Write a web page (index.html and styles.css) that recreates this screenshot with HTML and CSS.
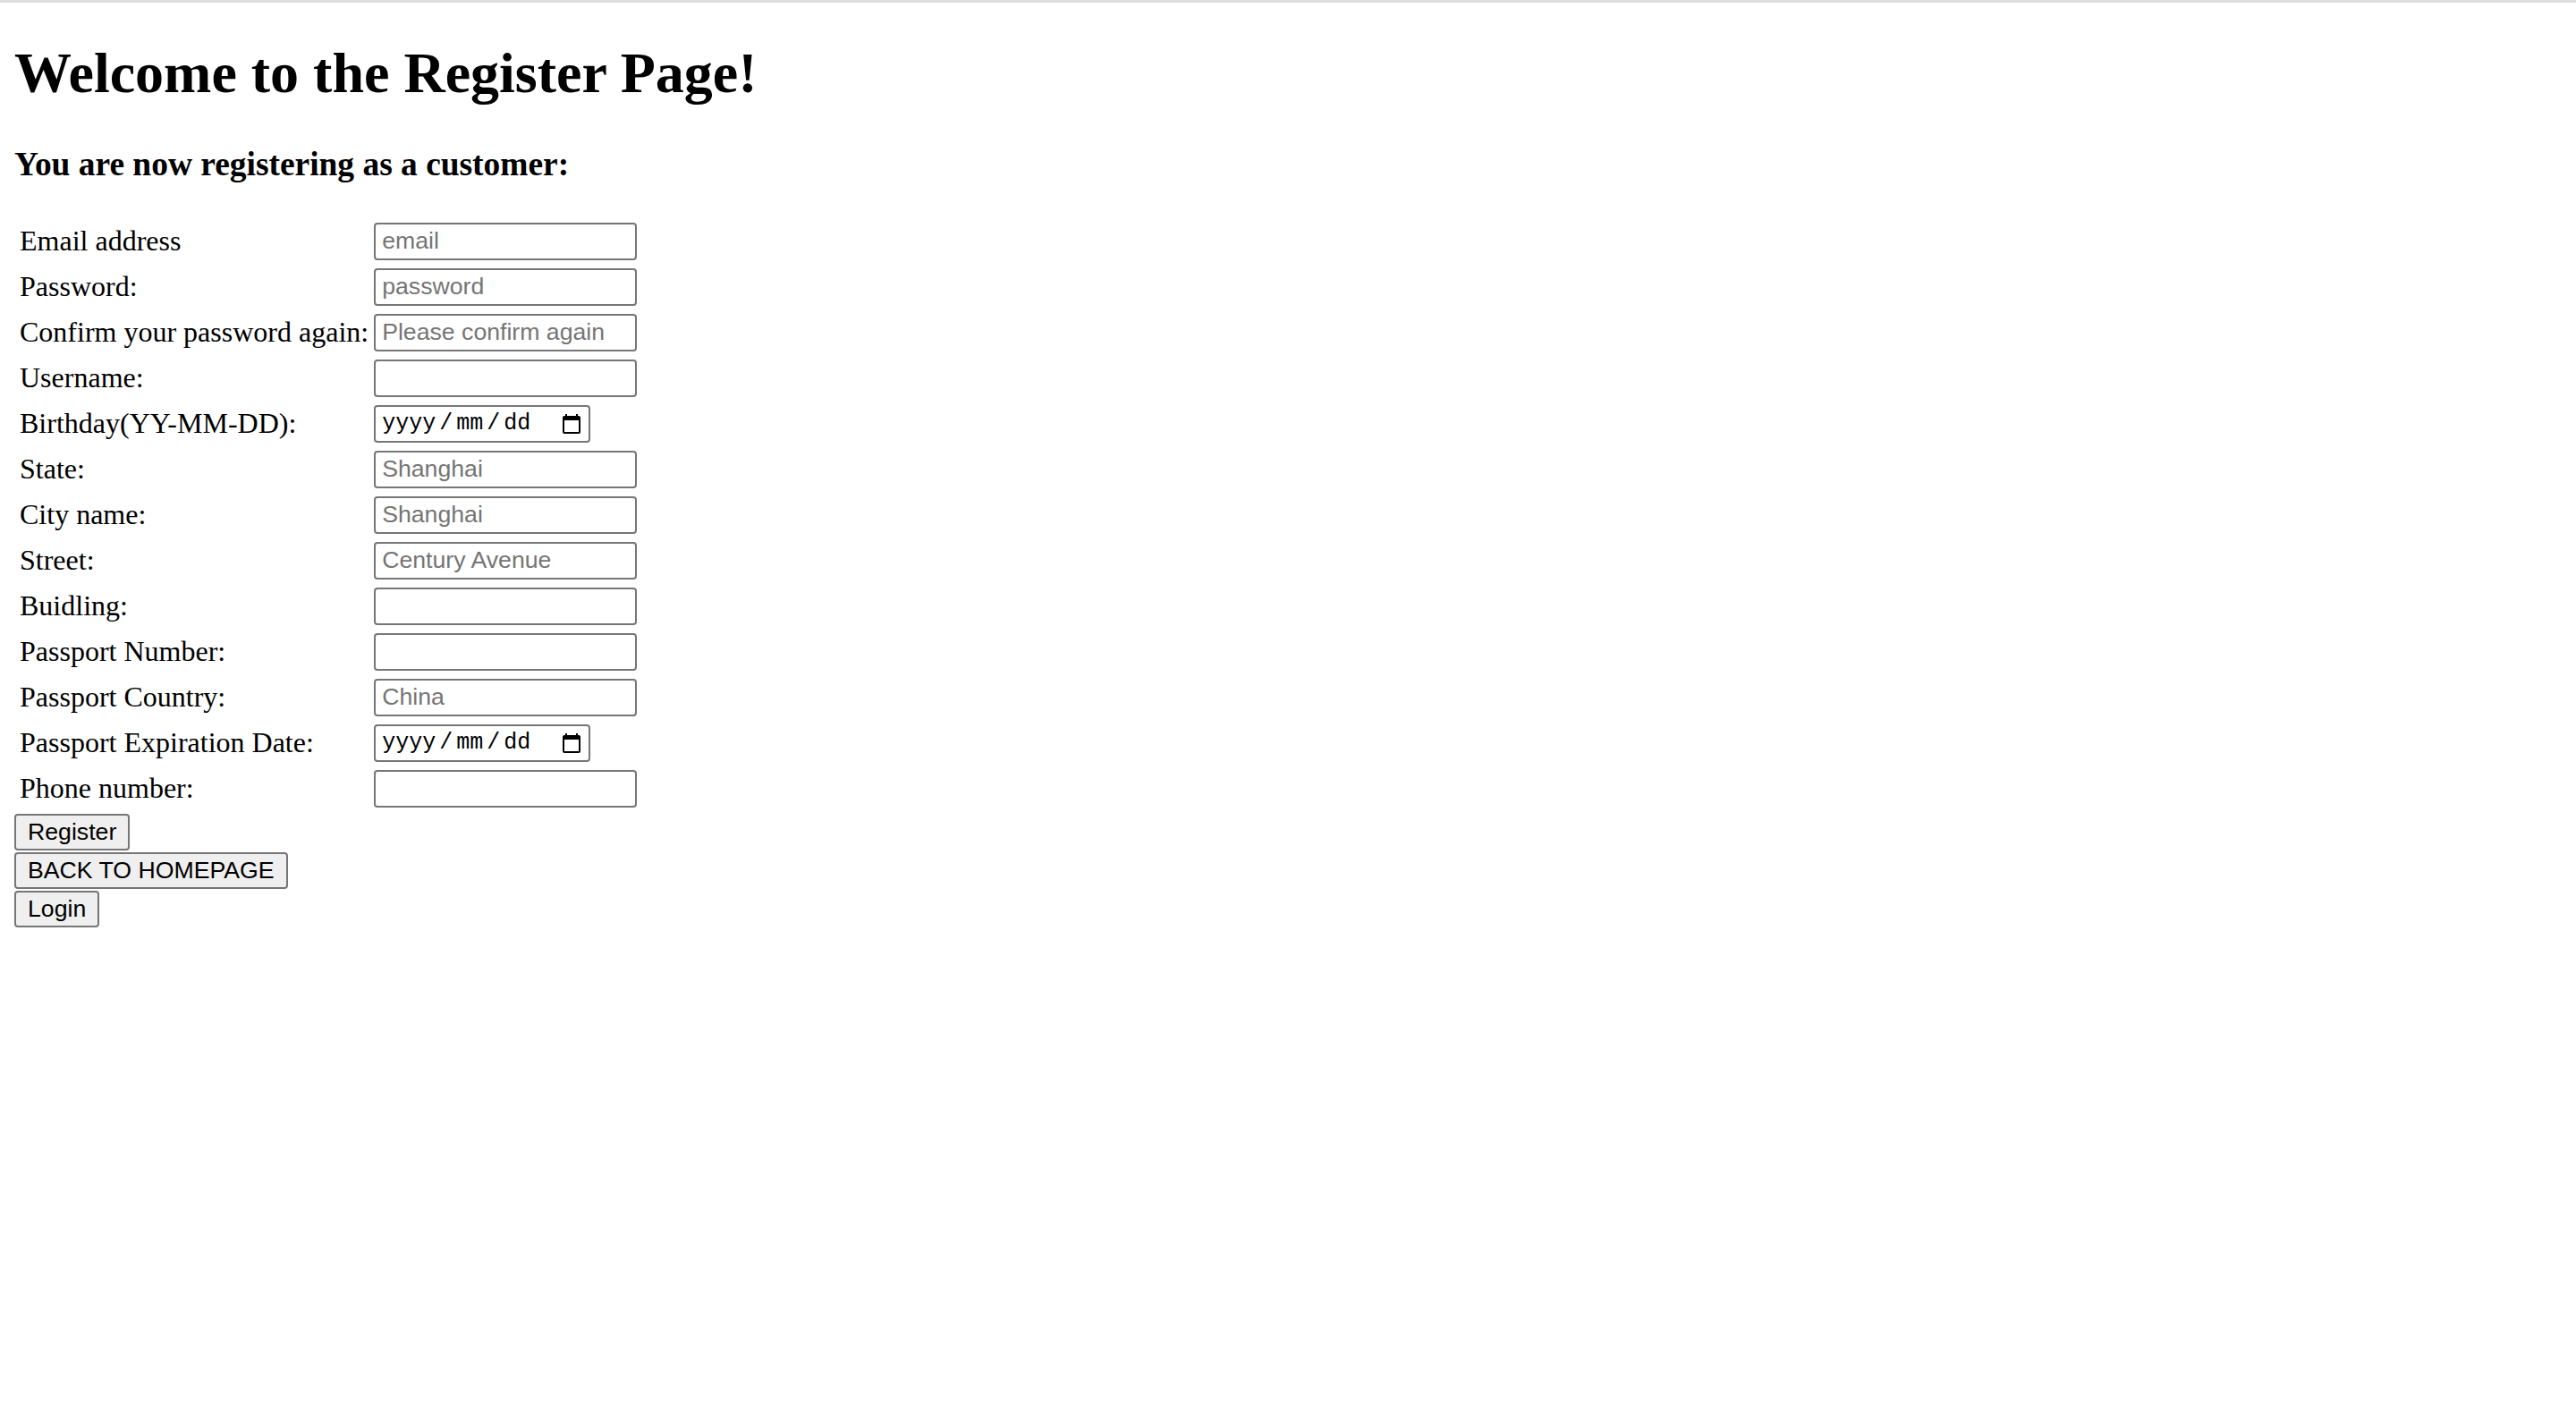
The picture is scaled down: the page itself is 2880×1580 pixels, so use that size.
FILE: index.html
```html
<!DOCTYPE html>
<html lang="en">
<head>
<meta charset="utf-8">
<title>Register</title>
<link rel="stylesheet" href="styles.css">
</head>
<body>
<div class="topline"></div>
<h1 class="title">Welcome to the Register Page!</h1>
<h3 class="subtitle">You are now registering as a customer:</h3>
<form class="register-form">
  <table class="form-table">
    <tr><td class="label">Email address</td><td><input class="field" type="text" placeholder="email"></td></tr>
    <tr><td class="label">Password:</td><td><input class="field" type="password" placeholder="password"></td></tr>
    <tr><td class="label">Confirm your password again:</td><td><input class="field" type="password" placeholder="Please confirm again"></td></tr>
    <tr><td class="label">Username:</td><td><input class="field" type="text"></td></tr>
    <tr><td class="label">Birthday(YY-MM-DD):</td><td>
      <div class="date-field"><span class="date-text"><span>yyyy</span><span class="sep">/</span><span>mm</span><span class="sep">/</span><span>dd</span></span>
        <svg class="cal" width="20" height="22" viewBox="2 1 20 22"><path d="M20 3h-1V1h-2v2H7V1H5v2H4c-1.1 0-2 .9-2 2v16c0 1.1.9 2 2 2h16c1.1 0 2-.9 2-2V5c0-1.1-.9-2-2-2zm0 18H4V8h16v13z" fill="#000"/></svg>
      </div></td></tr>
    <tr><td class="label">State:</td><td><input class="field" type="text" placeholder="Shanghai"></td></tr>
    <tr><td class="label">City name:</td><td><input class="field" type="text" placeholder="Shanghai"></td></tr>
    <tr><td class="label">Street:</td><td><input class="field" type="text" placeholder="Century Avenue"></td></tr>
    <tr><td class="label">Buidling:</td><td><input class="field" type="text"></td></tr>
    <tr><td class="label">Passport Number:</td><td><input class="field" type="text"></td></tr>
    <tr><td class="label">Passport Country:</td><td><input class="field" type="text" placeholder="China"></td></tr>
    <tr><td class="label">Passport Expiration Date:</td><td>
      <div class="date-field"><span class="date-text"><span>yyyy</span><span class="sep">/</span><span>mm</span><span class="sep">/</span><span>dd</span></span>
        <svg class="cal" width="20" height="22" viewBox="2 1 20 22"><path d="M20 3h-1V1h-2v2H7V1H5v2H4c-1.1 0-2 .9-2 2v16c0 1.1.9 2 2 2h16c1.1 0 2-.9 2-2V5c0-1.1-.9-2-2-2zm0 18H4V8h16v13z" fill="#000"/></svg>
      </div></td></tr>
    <tr><td class="label">Phone number:</td><td><input class="field" type="text"></td></tr>
  </table>
  <div class="actions">
    <button class="btn" type="button">Register</button>
    <button class="btn" type="button">BACK TO HOMEPAGE</button>
    <button class="btn" type="button">Login</button>
  </div>
</form>
</body>
</html>
```
FILE: styles.css
```css
html, body {
  background: #ffffff;
}
body {
  margin: 0;
  padding: 0 16px;
  font-family: "Liberation Serif", "Times New Roman", serif;
  font-size: 32px;
  color: #000000;
}
.topline {
  height: 3px;
  background: #dcdcdc;
  margin: 0 -16px;
}
.title {
  font-size: 64px;
  font-weight: bold;
  line-height: normal;
  margin: 42px 0 43px;
}
.subtitle {
  font-size: 37.44px;
  font-weight: bold;
  line-height: normal;
  margin: 0 0 37px;
}
.register-form {
  margin: 0;
}
.form-table {
  border-collapse: separate;
  border-spacing: 4px;
}
.form-table td {
  padding: 2.5px 2px;
  vertical-align: middle;
}
.form-table .label {
  white-space: nowrap;
  padding-right: 0;
}
.field {
  display: block;
  box-sizing: border-box;
  width: 294px;
  height: 42px;
  margin: 0;
  padding: 0 7px;
  border: 2px solid #767676;
  border-radius: 4px;
  background: #ffffff;
  font-family: "Liberation Sans", Arial, sans-serif;
  font-size: 26.67px;
  color: #000000;
  outline: none;
}
.field::placeholder {
  color: #757575;
  opacity: 1;
}
.date-field {
  display: flex;
  align-items: center;
  justify-content: space-between;
  box-sizing: border-box;
  width: 242px;
  height: 42px;
  padding: 0 9px 0 7px;
  border: 2px solid #767676;
  border-radius: 4px;
  background: #ffffff;
}
.date-text {
  font-family: "Liberation Mono", "Courier New", monospace;
  font-size: 25px;
  color: #000000;
  white-space: nowrap;
  margin-top: -1px;
}
.date-text .sep {
  padding: 0 4px;
}
.cal {
  display: block;
  flex: none;
}
.actions {
  display: flex;
  flex-direction: column;
  align-items: flex-start;
  gap: 2px;
  margin-top: 1px;
}
.btn {
  box-sizing: border-box;
  height: 41px;
  margin: 0;
  padding: 0 13px;
  border: 2px solid #767676;
  border-radius: 4px;
  background: #efefef;
  font-family: "Liberation Sans", Arial, sans-serif;
  font-size: 26.67px;
  color: #000000;
  line-height: normal;
}
```
